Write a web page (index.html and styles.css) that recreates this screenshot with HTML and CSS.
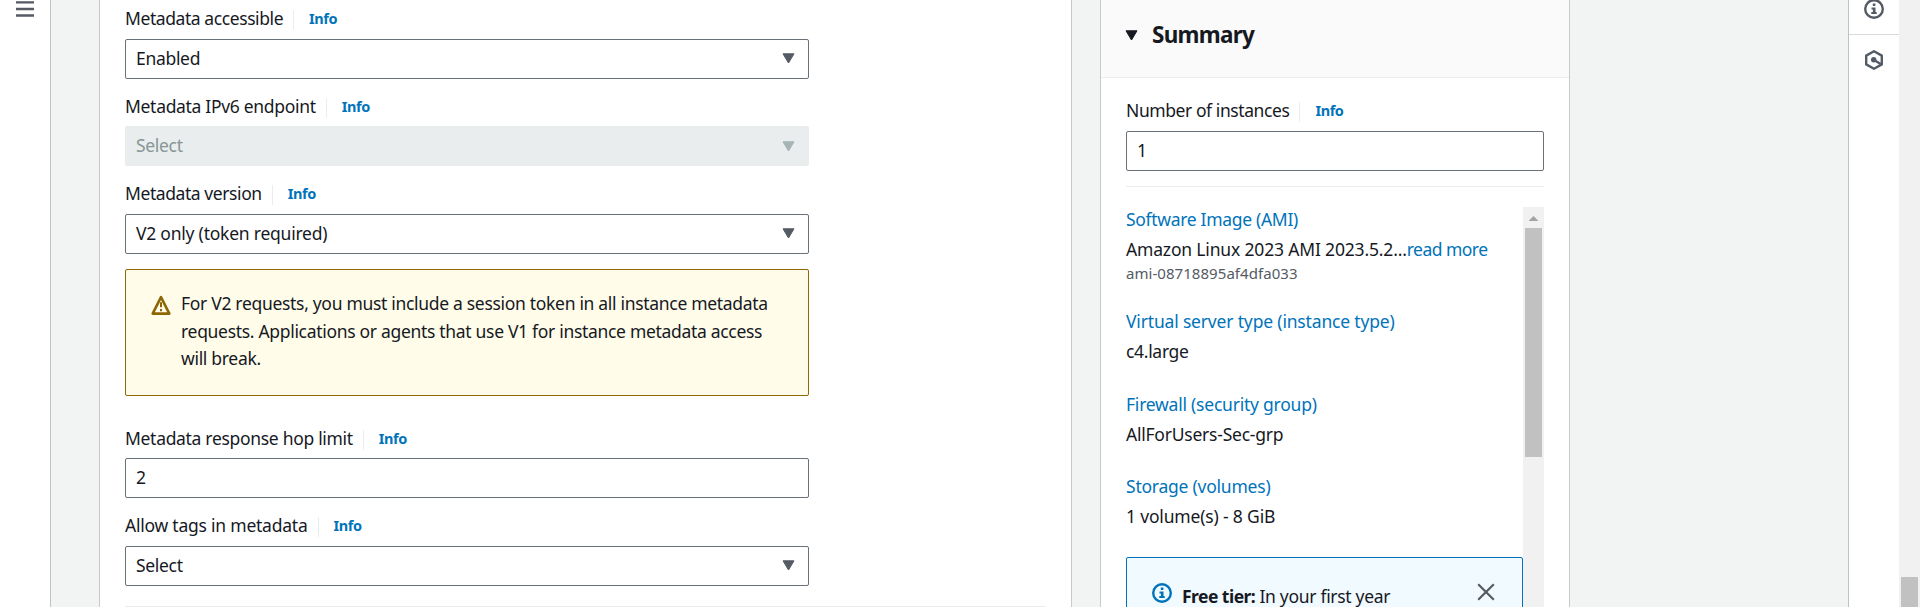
FILE: index.html
```html
<!DOCTYPE html>
<html lang="en">
<head>
<meta charset="utf-8">
<title>Launch an instance</title>
<link rel="stylesheet" href="styles.css">
</head>
<body>
<div class="app">
  <nav class="nav-rail">
    <svg class="menu-icon" width="18" height="16" viewBox="0 0 18 16"><path d="M0 1.4h18M0 8h18M0 14.5h18" stroke="#545b64" stroke-width="2.3"/></svg>
  </nav>
  <main class="content">
    <section class="card form">
      <div class="field">
        <div class="label"><span class="snug">Metadata accessible</span><a class="info">Info</a></div>
        <div class="control"><span>Enabled</span><svg class="caret" viewBox="0 0 13 11"><path d="M1 .8h11L6.5 10z"/></svg></div>
      </div>
      <div class="field">
        <div class="label"><span>Metadata IPv6 endpoint</span><a class="info">Info</a></div>
        <div class="control disabled"><span>Select</span><svg class="caret" viewBox="0 0 13 11"><path d="M1 .8h11L6.5 10z"/></svg></div>
      </div>
      <div class="field">
        <div class="label"><span class="snug">Metadata version</span><a class="info">Info</a></div>
        <div class="control"><span class="open">V2 only (token required)</span><svg class="caret" viewBox="0 0 13 11"><path d="M1 .8h11L6.5 10z"/></svg></div>
      </div>
      <div class="alert warning">
        <svg class="alert-icon" width="20" height="20" viewBox="0 0 20 20"><path d="M10 2.2 18.3 18.6H1.7z" fill="none" stroke="#8d6605" stroke-width="2.6" stroke-linejoin="round"/><path d="M10 7.3v5M10 14v2.2" stroke="#8d6605" stroke-width="2"/></svg>
        <p>For V2 requests, you must include a session token in all instance metadata<br>requests. Applications or agents that use V1 for instance metadata access<br>will break.</p>
      </div>
      <div class="field">
        <div class="label"><span>Metadata response hop limit</span><a class="info">Info</a></div>
        <div class="control"><span>2</span></div>
      </div>
      <div class="field">
        <div class="label"><span class="open">Allow tags in metadata</span><a class="info">Info</a></div>
        <div class="control"><span>Select</span><svg class="caret" viewBox="0 0 13 11"><path d="M1 .8h11L6.5 10z"/></svg></div>
      </div>
      <hr class="rule">
    </section>
    <aside class="card summary">
      <header class="summary-head">
        <svg class="toggle" width="13" height="11" viewBox="0 0 13 11"><path d="M1 .8h11L6.5 10z"/></svg>
        <h2>Summary</h2>
      </header>
      <div class="summary-body">
        <div class="label"><span class="snug">Number of instances</span><a class="info">Info</a></div>
        <div class="control"><span>1</span></div>
        <hr class="rule">
        <div class="scroller">
          <div class="details">
            <div class="item"><a>Software Image (AMI)</a>
              <div><span class="wide">Amazon Linux 2023 AMI 2023.5.2...</span><a class="tight">read more</a></div>
              <small>ami-08718895af4dfa033</small></div>
            <div class="item"><a class="wide">Virtual server type (instance type)</a><div>c4.large</div></div>
            <div class="item"><a class="open">Firewall (security group)</a><div class="open">AllForUsers-Sec-grp</div></div>
            <div class="item"><a class="open">Storage (volumes)</a><div class="wide">1 volume(s) - 8 GiB</div></div>
            <div class="alert tip">
              <svg class="alert-icon" width="20" height="20" viewBox="0 0 20 20"><circle cx="10" cy="10" r="8.8" fill="none" stroke="#0073bb" stroke-width="2.4"/><path d="M8.8 4.5h2.6v2.4H8.8zM7.5 8.4h4v4.6h1.2v2H7.3v-2h1.6v-2.6H7.5z" fill="#0073bb"/></svg>
              <p><b class="tight">Free tier:</b> <span>In your first year</span></p>
              <svg class="close" width="18" height="18" viewBox="0 0 18 18"><path d="M1.2 1.2l15.6 15.6M16.8 1.2L1.2 16.8" stroke="#545b64" stroke-width="2.2"/></svg>
            </div>
          </div>
          <div class="scrollbar"><i class="arrow"></i><i class="thumb"></i></div>
        </div>
      </div>
    </aside>
  </main>
  <aside class="tools">
    <div class="tool first"><svg width="20" height="20" viewBox="0 0 20 20"><circle cx="10" cy="10" r="8.8" fill="none" stroke="#545b64" stroke-width="2.4"/><path d="M8.8 4.5h2.6v2.4H8.8zM7.5 8.4h4v4.6h1.2v2H7.3v-2h1.6v-2.6H7.5z" fill="#545b64"/></svg></div>
    <div class="tool"><svg width="20" height="20" viewBox="0 0 20 20"><path d="M10 1.3 17.8 5.6v8.8L10 18.7 2.2 14.4V5.6z" fill="none" stroke="#545b64" stroke-width="2.4" stroke-linejoin="round"/><circle cx="9.7" cy="9.7" r="2.7" fill="#545b64"/><path d="M10 10l7.5 4.5" stroke="#545b64" stroke-width="2.4"/></svg></div>
  </aside>
  <div class="page-scroll"><i></i></div>
</div>
</body>
</html>
```
FILE: styles.css
```css
* { box-sizing: border-box; }
body { margin: 0; background: #f2f4f4; color: #16191f; font: 17.5px/22.5px "Noto Sans", "Open Sans", sans-serif; letter-spacing: -.31px; overflow: hidden; }
p, h2 { margin: 0; }
a { color: #0073bb; }
svg { display: block; flex: none; }

/* tracking steps */
.wide { letter-spacing: -.17px; }
.open { letter-spacing: -.23px; }
.snug { letter-spacing: -.42px; }
.tight { letter-spacing: -.53px; }

.app { display: flex; height: 607px; overflow: hidden; }
.nav-rail { width: 51px; flex: none; background: #fff; border-right: 1px solid #bcc3c6; padding: 1px 0 0 16px; }
.content { flex: 1; display: flex; gap: 28px; padding-left: 48px; }
.card { background: #fff; border: 1px solid #c6cacc; border-width: 0 1px; height: 607px; flex: none; overflow: hidden; }
.form { width: 973px; padding: 8.75px 0 0 25px; }
.field { width: 684px; margin-bottom: 17.5px; }
.label { height: 30px; padding-top: 1.25px; display: flex; white-space: nowrap; line-height: 17px; }
.info { font-size: 14.5px; font-weight: 700; letter-spacing: -.4px; margin-left: 10px; padding-left: 15px; height: 20px; border-left: 1px solid #eaeded; }
.control { height: 40px; border: 1px solid #687078; border-radius: 2px; background: #fff; padding: 0 13px 0 10px; display: flex; align-items: center; justify-content: space-between; }
.control span { margin-top: -2px; }
.control.disabled { background: #e9edee; border-color: #e9edee; color: #879596; }
.caret { width: 13px; height: 11px; fill: #545b64; stroke: #545b64; stroke-linejoin: round; }
.disabled .caret { fill: #a6b4b4; stroke: #a6b4b4; }
.alert { border: 1px solid; border-radius: 2px; display: flex; }
.warning { width: 684px; height: 127.5px; margin: -2.5px 0 32px; background: #fffce9; border-color: #906806; padding: 20.5px 0 0 25px; line-height: 27.5px; white-space: nowrap; }
.warning .alert-icon { margin: 4.5px 10px 0 0; }
.rule { border: 0; height: 1px; background: #eaeded; margin: 0; }
.form > .rule { margin: 20px 25px 0 0; }
.summary { width: 470px; }
.summary-head { height: 78px; background: #fafafa; border-bottom: 1px solid #eaeded; padding: 20px 0 0 24px; display: flex; gap: 14px; }
.toggle { margin-top: 10px; fill: #16191f; stroke: #16191f; stroke-linejoin: round; }
h2 { font-size: 22.5px; line-height: 30px; font-weight: 700; letter-spacing: -.75px; }
.summary-body { padding: 23px 25px 0; }
.summary-body > .rule { margin: 15px 0 20px; }
.scroller { display: flex; height: 400px; }
.details { flex: 1; padding-top: 1px; white-space: nowrap; }
.item { margin-bottom: 29.75px; line-height: 22.5px; }
.item > a { display: block; margin-bottom: 7.5px; }
small { display: block; font-size: 15px; line-height: 20px; color: #545b64; letter-spacing: .05px; position: relative; top: 2px; }
.tip { height: 120px; background: #f1faff; border-color: #0073bb; padding: 25px 27px 0 25px; }
.tip p { margin: 0 auto 0 10px; line-height: 27.5px; }
.scrollbar { width: 21px; background: #f1f1f1; }
.arrow { display: block; margin: 9px auto 7px; width: 10px; height: 5px; background: #a3a3a3; clip-path: polygon(50% 0, 100% 100%, 0 100%); }
.thumb { display: block; margin: 0 2px; height: 229px; background: #c1c1c1; }
.tools { width: 51px; flex: none; background: #fff; border-left: 1px solid #bcc3c6; }
.tool { display: flex; justify-content: center; padding-top: 15px; }
.tool.first { height: 35px; padding: 0; border-bottom: 1px solid #d5dbdb; }
.tool.first svg { margin-top: -1px; }
.page-scroll { width: 21px; flex: none; background: #f1f1f1; padding: 577px 2px 0; }
.page-scroll i { display: block; height: 30px; background: #c1c1c1; }
```
